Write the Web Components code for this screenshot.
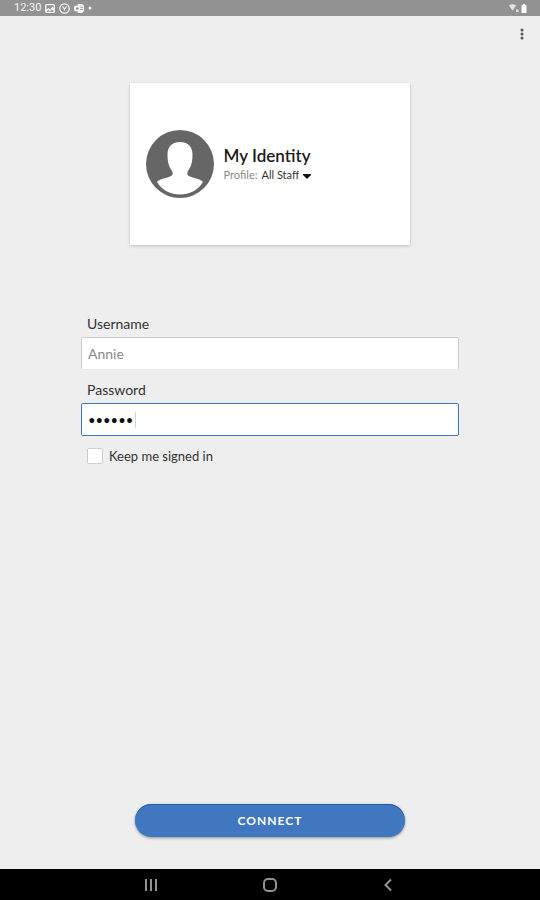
<!DOCTYPE html>
<html lang="en">
<head>
<meta charset="utf-8">
<meta name="viewport" content="width=device-width, initial-scale=1">
<title>Sign in</title>
<style>
html { height: 100%; }
body {
  margin: 0;
  min-height: 100%;
  display: flex;
  background: #eeeeee;
  color: #333333;
  font-family: Lato, "Liberation Sans", sans-serif;
}
</style>
</head>
<body>
<sign-in-page>
  <identity-card slot="card" name="My Identity"></identity-card>
  <text-field label="Username" type="text" placeholder="Annie"></text-field>
  <text-field label="Password" type="password" value="secret" active></text-field>
  <check-field>Keep me signed in</check-field>
  <pill-button slot="action">CONNECT</pill-button>
</sign-in-page>

<script>
class BaseElement extends HTMLElement {
  constructor () {
    super()
    this.attachShadow({ mode: 'open' })
    const template = document.createElement('template')
    template.innerHTML = this.constructor.markup
    this.shadowRoot.appendChild(template.content.cloneNode(true))
  }
}

class StatusBar extends BaseElement {
  static markup = `
<style>
:host {
  display: flex;
  align-items: center;
  gap: 4px;
  height: 16px;
  padding: 0 13px 0 14px;
  background: #929292;
  color: #f4f4f4;
  font: 11px/18px Roboto, sans-serif;
}
svg { display: block; }
.end { display: flex; align-items: center; gap: 2px; margin-left: auto; }
</style>
<span>12:30</span>
<svg width="10" height="9" viewBox="0 0 11 10"><path fill="#f4f4f4" fill-rule="evenodd" d="M1 0h9l1 1v8l-1 1H1L0 9V1zM1.500 1.500v5l2-2 2 1.500 2.500-3 1.500 1.500v-3zM1.500 8.500h8v-1l-2-1.500-2 2-2-1.500z"/></svg>
<svg width="11" height="11" viewBox="0 0 11 11" fill="none" stroke="#f4f4f4"><circle cx="5.500" cy="5.500" r="4.700" stroke-width="1.300"/><path d="M3.500 3.500l2 2.500 2-2.500M5.500 6v1.500" stroke-width="1.100"/></svg>
<svg width="10" height="9" viewBox="0 0 11 10" fill="#f4f4f4"><path d="M4 0h5l2 2v6l-2 2H4V8H1L0 7V3l1-1h3z"/><circle cx="3.500" cy="5" r="1.400" fill="#929292"/><path d="M6.500 3.500H10M6.500 6H10" stroke="#929292"/></svg>
<svg width="6" height="6" viewBox="0 0 6 6"><circle cx="2" cy="3" r="1.500" fill="#f4f4f4"/></svg>
<div class="end">
  <svg width="10" height="8" viewBox="0 0 10 8"><path fill="#e4e4e4" d="M0 1.500Q3.500-.8 7 1.500L3.500 6.500zM7 5.500h2.500V8H7z"/></svg>
  <svg width="6" height="9" viewBox="0 0 6 9"><path fill="#ffffff" d="M2 0h2v1h1.500v8h-5V1H2z"/></svg>
</div>
`
}

class IdentityCard extends BaseElement {
  static markup = `
<style>
:host {
  display: flex;
  align-items: center;
  box-sizing: border-box;
  gap: 10px;
  min-height: 162px;
  padding: 0 16px;
  background: #ffffff;
  box-shadow: 0 1px 3px rgba(0, 0, 0, 0.22);
}
.avatar { flex: none; width: 68px; height: 68px; }
h1 { margin: 0; color: #1b1b1b; font-size: 17px; line-height: 22px; font-weight: 600; }
.profile { display: flex; align-items: center; gap: 4px; font-size: 11px; line-height: 16px; }
.profile svg { padding-top: 3px; }
label { color: #888888; }
select {
  appearance: none;
  field-sizing: content;
  margin: 0;
  padding: 0;
  border: none;
  background: none;
  color: #333333;
  font: inherit;
}
</style>
<svg class="avatar" viewBox="0 0 68 68"><circle cx="34" cy="34" r="34" fill="#666666"/><path fill="#ffffff" d="M34 12c-8.500 0-12.500 5-12.500 12.500 0 8 1.500 12 4.500 16.500 1.500 3 .5 4.500-2 5.500-5 2-9.500 2-13 5.500C16 60.500 25 64.500 34 64.500s18-4 23-12.500C53.500 48.500 49 48.500 44 46.500c-2.500-1-3.500-2.500-2-5.500 3-4.500 4.500-8.500 4.500-16.500C46.500 17 42.500 12 34 12z"/></svg>
<div>
  <h1></h1>
  <div class="profile">
    <label for="profile">Profile:</label>
    <select id="profile"><option>All Staff</option></select>
    <svg width="8" height="5" viewBox="0 0 8 5"><path d="M0 0h8v1L4 5 0 1z" fill="#111111"/></svg>
  </div>
</div>
`

  connectedCallback () {
    this.shadowRoot.querySelector('h1').textContent = this.getAttribute('name')
  }
}

class TextField extends BaseElement {
  static markup = `
<style>
:host { display: block; }
label { display: block; padding: 0 6px; font-size: 14px; line-height: 26px; }
input {
  display: block;
  box-sizing: border-box;
  width: 100%;
  height: 33px;
  margin: 0;
  padding: 0 6px;
  border: 1px solid #cccccc;
  border-bottom-color: #eaeaea;
  border-radius: 2px;
  outline: none;
  background: #ffffff;
  color: #111111;
  font: inherit;
  font-size: 14px;
}
input::placeholder { color: #888888; }
input[type=password] { font-size: 13px; }
:host([active]) input {
  border-color: #4176c1;
  /* insertion point after the last bullet */
  background: linear-gradient(#d4d4d4, #d4d4d4) 53px center / 1px 16px no-repeat #ffffff;
}
</style>
<label for="field"></label>
<input id="field">
`

  connectedCallback () {
    const input = this.shadowRoot.querySelector('input')
    this.shadowRoot.querySelector('label').textContent = this.getAttribute('label')
    input.type = this.getAttribute('type')
    input.placeholder = this.getAttribute('placeholder') || ''
    input.value = this.getAttribute('value') || ''
  }
}

class CheckField extends BaseElement {
  static markup = `
<style>
:host { display: block; }
label { display: flex; align-items: center; gap: 6px; padding: 0 6px; font-size: 13px; line-height: 26px; }
input {
  appearance: none;
  box-sizing: border-box;
  width: 16px;
  height: 16px;
  margin: 0;
  border: 1px solid #cccccc;
  border-radius: 2px;
  background: #ffffff;
}
input:checked { background: #4176c1; }
</style>
<label><input type="checkbox"><span><slot></slot></span></label>
`
}

class PillButton extends BaseElement {
  static markup = `
<style>
:host { display: block; }
button {
  display: block;
  width: 100%;
  height: 33px;
  padding: 0;
  border: none;
  border-radius: 17px;
  background: #4176c1;
  box-shadow: inset 0 1px #1b63a8, 0 1px 3px rgba(0, 0, 0, 0.4);
  color: #ffffff;
  font: inherit;
  font-size: 12px;
  font-weight: 700;
  letter-spacing: 1px;
}
</style>
<button type="button"><slot></slot></button>
`
}

class NavBar extends BaseElement {
  static markup = `
<style>
:host {
  display: flex;
  justify-content: center;
  height: 31px;
  background: #000000;
}
nav { display: grid; grid-template-columns: repeat(3, 1fr); width: 66%; }
button {
  display: flex;
  align-items: center;
  justify-content: center;
  padding: 0;
  border: none;
  background: none;
}
svg { fill: none; stroke: #929292; stroke-width: 2; }
</style>
<nav>
  <button aria-label="Recent apps"><svg width="14" height="14" viewBox="0 0 14 14"><path d="M2 1v12M7 1v12M12 1v12"/></svg></button>
  <button aria-label="Home"><svg width="14" height="14" viewBox="0 0 14 14"><rect x="1" y="1" width="12" height="12" rx="4"/></svg></button>
  <button aria-label="Back"><svg width="14" height="14" viewBox="0 0 14 14"><path d="M9 1.500L3.500 7 9 12.500"/></svg></button>
</nav>
`
}

class SignInPage extends BaseElement {
  static markup = `
<style>
:host { display: flex; flex-direction: column; flex: 1; }
.toolbar { display: flex; justify-content: flex-end; padding: 8px 12px; }
.more { display: flex; width: 12px; height: 20px; padding: 0; border: none; background: none; align-items: center; justify-content: center; }
main { flex: 1; display: flex; flex-direction: column; align-items: center; padding: 31px 0 32px; }
.card { width: 52%; }
form { display: flex; flex-direction: column; gap: 7px; width: 70%; margin: 66px 0 40px; }
.action { width: 50%; margin-top: auto; }
</style>
<status-bar></status-bar>
<div class="toolbar">
  <button class="more" aria-label="More options"><svg width="4" height="12" viewBox="0 0 4 12" fill="#555555"><circle cx="2" cy="2" r="1.500"/><circle cx="2" cy="6" r="1.500"/><circle cx="2" cy="10" r="1.500"/></svg></button>
</div>
<main>
  <div class="card"><slot name="card"></slot></div>
  <form><slot></slot></form>
  <div class="action"><slot name="action"></slot></div>
</main>
<nav-bar></nav-bar>
`
}

customElements.define('status-bar', StatusBar)
customElements.define('identity-card', IdentityCard)
customElements.define('text-field', TextField)
customElements.define('check-field', CheckField)
customElements.define('pill-button', PillButton)
customElements.define('nav-bar', NavBar)
customElements.define('sign-in-page', SignInPage)
</script>
</body>
</html>
